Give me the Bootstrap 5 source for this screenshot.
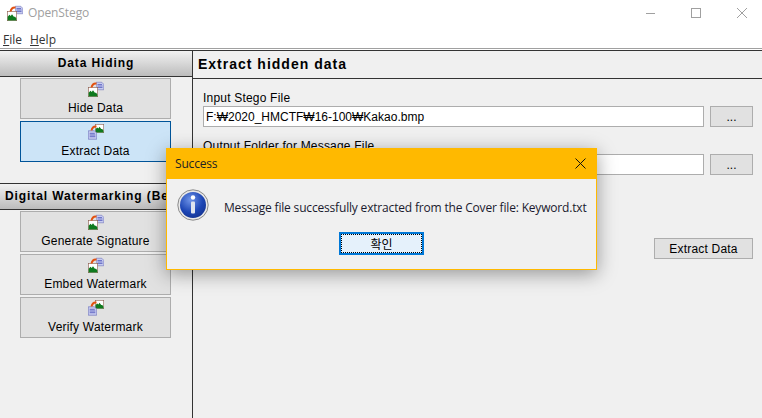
<!DOCTYPE html>
<html lang="en">
<head>
    <meta charset="UTF-8">
    <meta name="viewport" content="width=device-width, initial-scale=1.0">
    <title>OpenStego</title>
    <link href="https://cdn.jsdelivr.net/npm/bootstrap@5.3.0/dist/css/bootstrap.min.css" rel="stylesheet">
    <style>
        html, body { height: 100%; }
        body { background: #f0f0f0; overflow: hidden; font-family: "Liberation Sans", Arial, sans-serif; font-size: 12px; color: #000; }
        .app-window { height: 418px; }
        .title-strip { height: 30px; background: #fff; padding: 0 15px 4px 7px; color: #a0a0a0; font-family: "Open Sans", sans-serif; font-size: 12px; }
        .title-strip .win-name { margin-left: 5px; letter-spacing: -.1px; }
        .win-ctls { gap: 36px; }
        .menu-strip { height: 18px; background: #fff; padding-left: 3px; gap: 8px; font-family: "Open Sans", sans-serif; font-size: 12px; color: #333; border-bottom: 1px solid #a0a0a0; box-sizing: content-box; }
        .menu-strip span { margin-top: 2px; }
        .rule-top { height: 2px; background: #fff; border-bottom: 1px solid #333; }
        .side-panel { width: 193px; border-right: 1px solid #333; flex: none; }
        .side-head { height: 26px; margin: 0; line-height: 24px; font-size: 12px; font-weight: 700; letter-spacing: .9px; text-align: center; white-space: nowrap; background: linear-gradient(#f2f2f2, #bcbcbc); border-bottom: 1px solid #333; font-family: "Liberation Sans", sans-serif; }
        .side-head.second { margin-top: 21px; border-top: 1px solid #333; height: 27px; text-align: left; padding-left: 5px; }
        .tool-list { padding: 1px 21px 0 20px; gap: 2px; }
        .tool-btn { display: flex; flex-direction: column; align-items: center; height: 41px; border: 1px solid #adadad; background: #e1e1e1; border-radius: 0; padding: 2px 0 0; font-size: 12px; color: #000; letter-spacing: .2px; line-height: 14px; white-space: nowrap; }
        .tool-btn.active-tool { background: #cce4f7; border-color: #005499; }
        .tool-btn svg { display: block; flex: none; margin-bottom: 4px; }
        .main-panel { min-width: 0; }
        .main-head { height: 28px; margin: 0; padding-left: 5px; font-size: 14px; font-weight: 700; line-height: 26px; letter-spacing: 1px; border-bottom: 1px solid #333; font-family: "Liberation Sans", sans-serif; }
        .main-body { padding: 12px 9px 0 10px; }
        .field-label { display: block; margin: 0; line-height: 15px; letter-spacing: .2px; }
        .field-row { gap: 6px; margin-bottom: 12px; }
        .path-input { height: 21px; flex: 1; border: 1px solid #adadad; border-radius: 0; padding: 0 2px; font-size: 12px; background: #fff; color: #000; }
        .win-btn { height: 21px; border: 1px solid #adadad; background: #e1e1e1; border-radius: 0; padding: 1px 0 0; font-size: 12px; color: #000; line-height: 19px; }
        .browse-btn { width: 43px; }
        .run-btn { width: 99px; letter-spacing: .2px; }
        .run-row { margin-top: 63px; }
        .msg-dialog { position: absolute; left: 166px; top: 148px; width: 431px; height: 122px; background: #f0f0f0; border: 1px solid #ffb900; border-top: 0; box-shadow: 0 4px 18px rgba(0, 0, 0, .38); font-family: "Open Sans", sans-serif; font-size: 12px; letter-spacing: -.18px; }
        .msg-title { height: 31px; margin: 0 -1px; background: #ffb900; padding: 0 0 0 9px; color: #222; }
        .msg-close { width: 34px; height: 31px; }
        .msg-body { padding: 10px 0 0 10px; gap: 15px; height: 53px; }
        .msg-text { color: #1a1a2e; white-space: nowrap; margin-top: 10px; }
        .ok-btn { display: block; width: 85px; height: 23px; margin: 0 0 0 172px; padding: 0; border: 2px solid #0078d7; background: #e5f1fb; border-radius: 0; font-family: "Noto Sans CJK KR", sans-serif; font-size: 12px; line-height: 17px; color: #000; outline: 1px dotted #000; outline-offset: -3px; }
    </style>
</head>
<body>
    <svg width="0" height="0" class="d-block position-absolute">
        <defs>
            <symbol id="pic" viewBox="0 0 16 16">
                <rect x=".5" y=".5" width="15" height="15" fill="#fff" stroke="#8a5a4a"/>
                <path d="M1 15V9l3-3 2 2 2-3 3 4 2 0 2 3v3z" fill="#0f7a1e"/>
            </symbol>
            <symbol id="doc" viewBox="0 0 16 16">
                <path d="M.5.5h11l4 4v11H.5z" fill="#c8ccf0" stroke="#5a5fb0"/>
                <path d="M3 5h9M3 8h10M3 11h10" stroke="#4a50b8" stroke-width="1.4"/>
            </symbol>
            <symbol id="arc" viewBox="0 0 16 16">
                <path d="M1 11C2 4 7 0 13 1L13 5C8 4 6 7 5 11z" fill="#e2500f"/>
            </symbol>
            <symbol id="ico-hide" viewBox="0 0 16 16">
                <use href="#doc" x="8" y="0" width="8" height="10"/>
                <use href="#pic" x="0" y="6" width="10" height="10"/>
                <use href="#arc" x="1" y="1" width="10" height="8"/>
            </symbol>
            <symbol id="ico-extract" viewBox="0 0 16 16">
                <use href="#pic" x="7" y="0" width="9" height="9"/>
                <use href="#doc" x="0" y="6" width="9" height="10"/>
                <use href="#arc" x="1" y="1" width="10" height="8"/>
            </symbol>
        </defs>
    </svg>

    <div class="app-window d-flex flex-column">
        <div class="title-strip d-flex align-items-center">
            <svg width="16" height="16"><use href="#ico-hide"/></svg>
            <span class="win-name flex-grow-1">OpenStego</span>
            <div class="win-ctls d-flex align-items-center">
                <svg width="10" height="10"><path d="M1 5.5h10" stroke="#a0a0a0"/></svg>
                <svg width="10" height="10"><rect x=".5" y=".5" width="9" height="9" fill="none" stroke="#a0a0a0"/></svg>
                <svg width="10" height="10"><path d="M0 0l10 10M10 0L0 10" stroke="#a0a0a0"/></svg>
            </div>
        </div>
        <div class="menu-strip d-flex align-items-center">
            <span><u>F</u>ile</span>
            <span><u>H</u>elp</span>
        </div>
        <div class="rule-top"></div>

        <div class="d-flex flex-grow-1">
            <aside class="side-panel d-flex flex-column">
                <h6 class="side-head">Data Hiding</h6>
                <div class="tool-list d-flex flex-column">
                    <button class="btn tool-btn"><svg width="16" height="16"><use href="#ico-hide"/></svg>Hide Data</button>
                    <button class="btn tool-btn active-tool"><svg width="16" height="16"><use href="#ico-extract"/></svg>Extract Data</button>
                </div>
                <h6 class="side-head second">Digital Watermarking (Beta)</h6>
                <div class="tool-list d-flex flex-column">
                    <button class="btn tool-btn"><svg width="16" height="16"><use href="#ico-hide"/></svg>Generate Signature</button>
                    <button class="btn tool-btn"><svg width="16" height="16"><use href="#ico-hide"/></svg>Embed Watermark</button>
                    <button class="btn tool-btn"><svg width="16" height="16"><use href="#ico-extract"/></svg>Verify Watermark</button>
                </div>
            </aside>

            <main class="main-panel flex-grow-1">
                <h5 class="main-head">Extract hidden data</h5>
                <div class="main-body">
                    <label class="field-label">Input Stego File</label>
                    <div class="field-row d-flex">
                        <input class="path-input" type="text" value="F:₩2020_HMCTF₩16-100₩Kakao.bmp">
                        <button class="btn win-btn browse-btn">...</button>
                    </div>
                    <label class="field-label">Output Folder for Message File</label>
                    <div class="field-row d-flex">
                        <input class="path-input" type="text">
                        <button class="btn win-btn browse-btn">...</button>
                    </div>
                    <div class="run-row d-flex justify-content-end">
                        <button class="btn win-btn run-btn">Extract Data</button>
                    </div>
                </div>
            </main>
        </div>
    </div>

    <div class="msg-dialog">
        <div class="msg-title d-flex align-items-center justify-content-between">
            <span>Success</span>
            <span class="msg-close d-flex align-items-center justify-content-center">
                <svg width="11" height="11"><path d="M.5.5l10 10M10.5.5l-10 10" stroke="#111"/></svg>
            </span>
        </div>
        <div class="msg-body d-flex">
            <svg width="32" height="32" viewBox="0 0 32 32" class="flex-shrink-0">
                <defs>
                    <radialGradient id="orb" cx=".4" cy=".3" r=".8">
                        <stop offset="0" stop-color="#6f94e8"/>
                        <stop offset=".6" stop-color="#1c45b4"/>
                        <stop offset="1" stop-color="#12308c"/>
                    </radialGradient>
                </defs>
                <circle cx="16" cy="16" r="15.2" fill="#e8e8e8" stroke="#8a8a8a" stroke-width="1"/>
                <circle cx="16" cy="16" r="13" fill="url(#orb)"/>
                <circle cx="16" cy="8.5" r="2.2" fill="#fff"/>
                <rect x="14" y="12.5" width="4" height="12" rx="1" fill="#dfe4ee"/>
            </svg>
            <div class="msg-text">Message file successfully extracted from the Cover file: Keyword.txt</div>
        </div>
        <button class="btn ok-btn">확인</button>
    </div>

    <script src="https://cdn.jsdelivr.net/npm/bootstrap@5.3.0/dist/js/bootstrap.bundle.min.js"></script>
</body>
</html>
